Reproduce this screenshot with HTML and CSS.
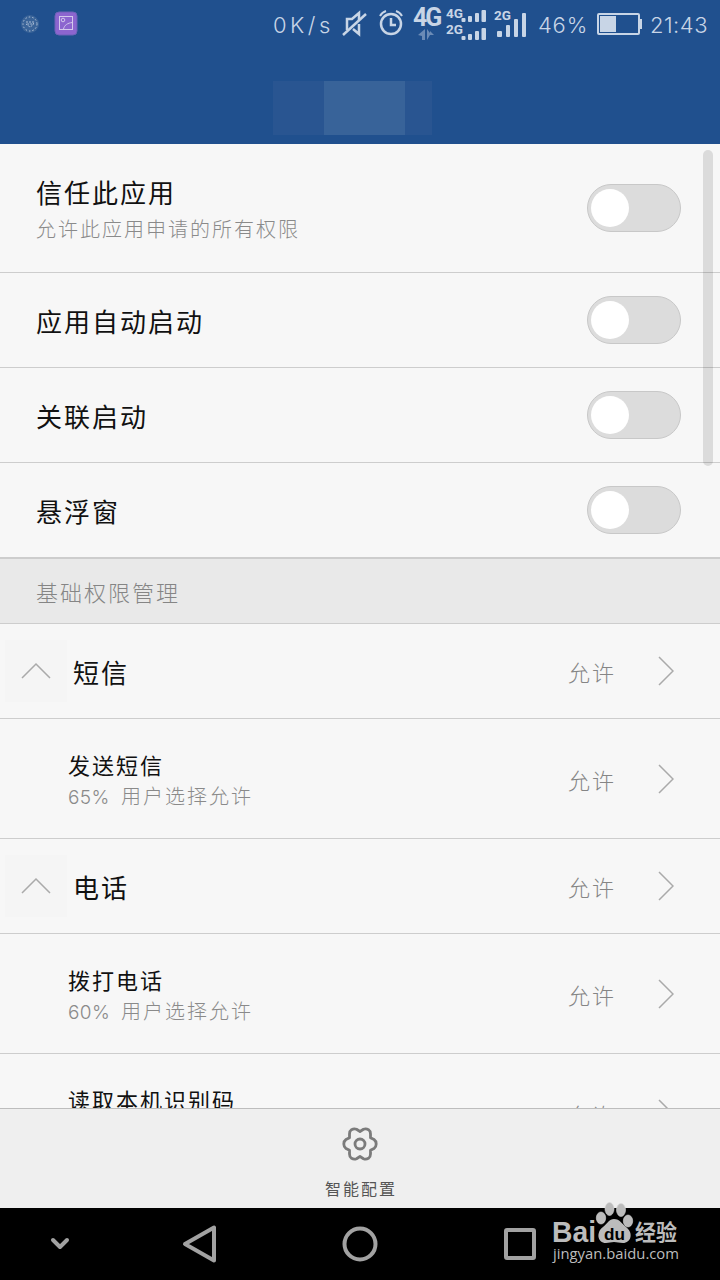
FILE: index.html
```
<!DOCTYPE html>
<html lang="zh-CN">
<head>
    <meta charset="UTF-8">
    <title>权限管理</title>
    <link rel="stylesheet" href="styles.css">
</head>
<body>
    <header class="header">
        <!-- 状态栏 -->
        <div class="status">
            <svg class="notice" width="60" height="26" viewBox="0 0 60 26">
                <circle cx="12" cy="13" r="9" fill="#3a6499"/>
                <circle cx="12" cy="13" r="7" fill="none" stroke="#b5c6dc" stroke-dasharray="1.5 2"/>
                <path d="M8 11h8l-1 3-3 2-4-3h7" fill="none" stroke="#a9bcd5" stroke-dasharray="2 1"/>
                <rect x="37" y="1" width="22" height="23" rx="4" fill="#8c65cf" stroke="#6d62b8"/>
                <rect x="41.5" y="5.500" width="13" height="13" fill="none" stroke="#d2c8ec"/>
                <circle cx="45" cy="9" r="1.800" fill="none" stroke="#d2c8ec"/>
                <path d="M45.500 18c1-4 4-6 9-6.500" fill="none" stroke="#d2c8ec"/>
            </svg>
            <span class="speed">0K/s</span>
            <svg class="mute" width="26" height="28" viewBox="0 0 26 28" fill="none" stroke="#c8d5e6" stroke-width="2.500">
                <path d="M1 25L24 4"/>
                <path d="M5 20V9h5l7-6v7M11 19l6 5V14"/>
            </svg>
            <svg class="alarm" width="26" height="28" viewBox="0 0 26 28" fill="none" stroke="#c8d5e6">
                <circle cx="13" cy="15" r="10" stroke-width="2.500"/>
                <path d="M13 9v7h5" stroke-width="2.500"/>
                <path d="M2 7c1-2 3-4 6-5M24 7c-1-2-3-4-6-5" stroke-width="2"/>
            </svg>
            <div class="network">
                <span>4G</span>
                <svg width="16" height="11" viewBox="0 0 16 11" fill="#6b8bb6">
                    <path d="M7 0v11H4V7L0 6zM9 0v11l3-5h4L12 2v2z"/>
                </svg>
            </div>
            <svg class="dual" width="42" height="36" viewBox="0 0 42 36" fill="#c8d5e6">
                <text class="tiny" x="0" y="13">4G</text>
                <text class="tiny" x="0" y="29">2G</text>
                <g id="bars">
                    <rect x="15.500" y="13" width="4" height="4" rx="1"/>
                    <rect x="22" y="11" width="4" height="6" rx="1"/>
                    <rect x="29" y="8" width="4" height="9" rx="1"/>
                    <rect x="35.500" y="5" width="4.500" height="12" rx="1"/>
                </g>
                <use href="#bars" y="18"/>
            </svg>
            <svg class="single" width="34" height="32" viewBox="0 0 34 32" fill="#c8d5e6">
                <text class="tiny" x="0" y="13">2G</text>
                <rect x="3" y="24" width="5" height="6" rx="1"/>
                <rect x="12" y="18" width="4" height="12" rx="1"/>
                <rect x="20" y="12" width="4" height="18" rx="1"/>
                <rect x="28" y="6" width="4" height="24" rx="1"/>
            </svg>
            <span class="percent">46%</span>
            <svg class="battery" width="46" height="24" viewBox="0 0 46 24">
                <rect x="2" y="2" width="41" height="20" rx="1" fill="none" stroke="#c8d5e6" stroke-width="2"/>
                <path d="M4 4h16v16H4zM44 7h2v10h-2z" fill="#c8d5e6"/>
            </svg>
            <span class="clock">21:43</span>
        </div>
        <!-- 应用名称 -->
        <div class="app-name"><i></i><i></i><i></i></div>
    </header>

    <main class="content">
        <div class="row trust">
            <div class="label">
                <p class="title">信任此应用</p>
                <p class="desc">允许此应用申请的所有权限</p>
            </div>
            <div class="switch"></div>
        </div>
        <div class="row">
            <p class="title">应用自动启动</p>
            <div class="switch"></div>
        </div>
        <div class="row">
            <p class="title">关联启动</p>
            <div class="switch"></div>
        </div>
        <div class="row">
            <p class="title">悬浮窗</p>
            <div class="switch"></div>
        </div>

        <h2 class="section">基础权限管理</h2>

        <div class="row group">
            <svg class="fold" width="62" height="62" viewBox="0 0 62 62"><path d="M17 38L31 24l14 14"/></svg>
            <p class="title">短信</p>
            <span class="state">允许</span>
            <svg class="arrow" width="16" height="30" viewBox="0 0 16 30"><path d="M1 1l14 14L1 29"/></svg>
        </div>
        <div class="row item">
            <div class="label">
                <p class="name">发送短信</p>
                <p class="desc"><span class="rate">65%</span>用户选择允许</p>
            </div>
            <span class="state">允许</span>
            <svg class="arrow" width="16" height="30" viewBox="0 0 16 30"><path d="M1 1l14 14L1 29"/></svg>
        </div>
        <div class="row group">
            <svg class="fold" width="62" height="62" viewBox="0 0 62 62"><path d="M17 38L31 24l14 14"/></svg>
            <p class="title">电话</p>
            <span class="state">允许</span>
            <svg class="arrow" width="16" height="30" viewBox="0 0 16 30"><path d="M1 1l14 14L1 29"/></svg>
        </div>
        <div class="row item">
            <div class="label">
                <p class="name">拨打电话</p>
                <p class="desc"><span class="rate">60%</span>用户选择允许</p>
            </div>
            <span class="state">允许</span>
            <svg class="arrow" width="16" height="30" viewBox="0 0 16 30"><path d="M1 1l14 14L1 29"/></svg>
        </div>
        <div class="row item">
            <div class="label">
                <p class="name">读取本机识别码</p>
            </div>
            <span class="state">允许</span>
            <svg class="arrow" width="16" height="30" viewBox="0 0 16 30"><path d="M1 1l14 14L1 29"/></svg>
        </div>
        <div class="scrollbar"></div>
    </main>

    <!-- 底部工具栏 -->
    <footer class="toolbar">
        <svg width="36" height="36" viewBox="0 0 36 36" fill="none" stroke="#7b7b7b" stroke-width="2.800" stroke-linejoin="round">
            <path d="M18 5.500L21.500 3.300Q24 2.300 26.500 3.700Q28.500 5 28.500 8V11.800L32 13.500Q34.200 15 34.200 18Q34.200 21 32 22.500L28.500 24.200V28Q28.500 31 26.500 32.300Q24 33.700 21.500 32.700L18 30.500L14.500 32.700Q12 33.700 9.500 32.300Q7.500 31 7.500 28V24.200L4 22.500Q1.800 21 1.800 18Q1.800 15 4 13.500L7.500 11.800V8Q7.500 5 9.500 3.700Q12 2.300 14.500 3.300Z"/>
            <circle cx="18" cy="18" r="5"/>
        </svg>
        <span>智能配置</span>
    </footer>

    <!-- 导航键 -->
    <nav class="nav">
        <svg width="20" height="14" viewBox="0 0 20 14"><path d="M3 3l7 7 7-7"/></svg>
        <svg width="36" height="40" viewBox="0 0 36 40"><path d="M32 3.500v33L3 20z"/></svg>
        <svg width="40" height="40" viewBox="0 0 40 40"><circle cx="20" cy="20" r="15.500"/></svg>
        <svg width="40" height="40" viewBox="0 0 40 40"><rect x="6" y="6" width="28" height="28" rx="1"/></svg>
    </nav>

    <!-- 水印 -->
    <svg class="watermark" width="132" height="66" viewBox="0 0 132 66" fill="#bcbcbc">
        <text class="logo" x="1" y="41" textLength="44" lengthAdjust="spacingAndGlyphs">Bai</text>
        <g stroke="#d7d7d7" stroke-width=".6">
            <ellipse cx="50" cy="17" rx="4.700" ry="6"/>
            <ellipse cx="58.500" cy="8" rx="4.500" ry="6.500"/>
            <ellipse cx="70" cy="9" rx="4.500" ry="6.500"/>
            <ellipse cx="77" cy="20" rx="4.700" ry="6"/>
        </g>
        <path d="M63 18c6 0 8 5 12 8 8 6 5 16-3 16-4 0-6-1-9-1s-5 1-8 1c-9 0-10-11-3-16 5-4 6-8 11-8z"/>
        <text class="du" x="53" y="39" textLength="21" lengthAdjust="spacingAndGlyphs">du</text>
        <text class="cn" x="84" y="39" textLength="42" lengthAdjust="spacingAndGlyphs">经验</text>
        <text class="url" x="2" y="58" textLength="126" lengthAdjust="spacingAndGlyphs">jingyan.baidu.com</text>
    </svg>
</body>
</html>
```
FILE: styles.css
```
body {
    position: relative;
    display: flex;
    flex-direction: column;
    width: 720px;
    height: 1280px;
    margin: 0;
    overflow: hidden;
    background-color: #f7f7f7;
    font-family: "Noto Sans CJK SC", sans-serif;
    font-weight: 400;
}

p, h2 {
    margin: 0;
}

svg {
    display: block;
    flex: none;
}

/* 顶部 */
.header {
    height: 144px;
    background-color: #20508e;
    color: #c8d5e6;
}

.status {
    display: flex;
    align-items: center;
    height: 50px;
    padding: 0 12px 0 18px;
    font-family: Inter, "Liberation Sans", sans-serif;
    font-size: 22px;
    font-weight: 300;
    line-height: 50px;
    white-space: nowrap;
}

.notice {
    margin-right: 195px;
    margin-bottom: 2px;
}

.speed {
    width: 69px;
    letter-spacing: 3.5px;
}

.mute {
    margin-right: 10px;
    margin-bottom: 2px;
}

.alarm {
    margin-right: 9px;
    margin-bottom: 4px;
}

.network {
    width: 33px;
    height: 34px;
    margin-bottom: 4px;
    font-family: Roboto, sans-serif;
    font-size: 25px;
    font-weight: 700;
    line-height: 24px;
    letter-spacing: -2px;
}

.network span {
    display: block;
    height: 23px;
}

.network svg {
    margin-left: 5px;
}

.tiny {
    font-family: Roboto, sans-serif;
    font-size: 13.5px;
    font-weight: 700;
}

.dual {
    margin-right: 6px;
    margin-bottom: 4px;
}

.single {
    margin-right: 10px;
    margin-bottom: 4px;
}

.percent {
    width: 58px;
    letter-spacing: 0.8px;
}

.battery {
    margin-right: 8px;
    margin-bottom: 2px;
}

.clock {
    letter-spacing: 0.5px;
}

.app-name {
    display: flex;
    width: 159px;
    height: 54px;
    margin: 31px 0 0 273px;
}

.app-name i {
    width: 51px;
    background-color: #295591;
}

.app-name i:nth-child(2) {
    width: 81px;
    background-color: #386399;
}

.app-name i:last-child {
    width: 27px;
}

/* 列表 */
.content {
    position: relative;
    flex: none;
    height: 964px;
    overflow: hidden;
}

.row {
    display: flex;
    align-items: center;
    box-sizing: border-box;
    height: 95px;
    padding: 0 39px 0 36px;
    border-bottom: 1px solid #cdcdcd;
}

.row.trust {
    height: 129px;
}

.title {
    flex: 1;
    padding-top: 2px;
    color: #111;
    font-size: 26px;
    line-height: 36px;
    letter-spacing: 2px;
}

.label {
    flex: 1;
}

.trust .title {
    padding-top: 2px;
}

.desc {
    color: #8a8a8a;
    font-size: 20px;
    font-weight: 300;
    line-height: 30px;
    letter-spacing: 2px;
}

.trust .desc {
    margin-top: 4px;
}

.switch {
    box-sizing: border-box;
    width: 94px;
    height: 48px;
    padding: 4px 3px;
    border: 1px solid #c8c8c8;
    border-radius: 24px;
    background-color: #dcdcdc;
}

.switch::before {
    content: "";
    display: block;
    width: 38px;
    height: 38px;
    border-radius: 50%;
    background-color: #fff;
}

.section {
    box-sizing: border-box;
    height: 66px;
    padding: 0 36px;
    border-top: 1px solid #cdcdcd;
    border-bottom: 1px solid #cdcdcd;
    background-color: #e9e9e9;
    color: #858585;
    font-size: 22px;
    font-weight: 300;
    line-height: 64px;
    letter-spacing: 2px;
}

.row.group {
    padding-left: 5px;
}

.group .title {
    padding-left: 6px;
}

.fold {
    background-color: #f5f5f5;
}

.fold path, .arrow path {
    fill: none;
    stroke: #aaa;
    stroke-width: 1.5;
}

.row.item {
    height: 120px;
    padding-left: 68px;
}

.name {
    color: #111;
    font-size: 22px;
    line-height: 32px;
    letter-spacing: 2px;
}

.item .label {
    align-self: flex-start;
    padding-top: 29px;
}

.item .desc {
    line-height: 32px;
}

.rate {
    display: inline-block;
    width: 53px;
    font-family: Inter, sans-serif;
    font-size: 19px;
    letter-spacing: 0.4px;
}

.state {
    width: 90px;
    color: #858585;
    font-size: 22px;
    font-weight: 300;
    letter-spacing: 2px;
}

.arrow {
    margin-right: 7px;
}

.scrollbar {
    position: absolute;
    top: 6px;
    right: 7px;
    width: 10px;
    height: 316px;
    border-radius: 5px;
    background-color: rgba(0, 0, 0, 0.11);
}

/* 底部 */
.toolbar {
    display: flex;
    flex-direction: column;
    align-items: center;
    box-sizing: border-box;
    height: 100px;
    padding-top: 17px;
    border-top: 1px solid #bdbdbd;
    background-color: #efefef;
    color: #555;
    font-size: 16px;
    letter-spacing: 2px;
}

.toolbar span {
    margin: 13px 0 0 2px;
    line-height: 26px;
}

.nav {
    display: grid;
    grid-template-columns: 120px 160px 160px 160px;
    align-items: center;
    justify-items: center;
    height: 72px;
    background-color: #000;
}

.nav svg {
    fill: none;
    stroke: #a2a2a2;
    stroke-width: 4;
    stroke-linejoin: round;
    stroke-linecap: round;
}

.watermark {
    position: absolute;
    left: 551px;
    top: 1201px;
}

.logo {
    font-family: "Liberation Sans", sans-serif;
    font-size: 29px;
    font-weight: 700;
}

.du {
    fill: #000;
    font-family: "Liberation Sans", sans-serif;
    font-size: 17px;
    font-weight: 700;
}

.cn {
    font-size: 22px;
    font-weight: 700;
}

.url {
    font-family: "Open Sans", sans-serif;
    font-size: 15px;
    font-weight: 400;
}
```
